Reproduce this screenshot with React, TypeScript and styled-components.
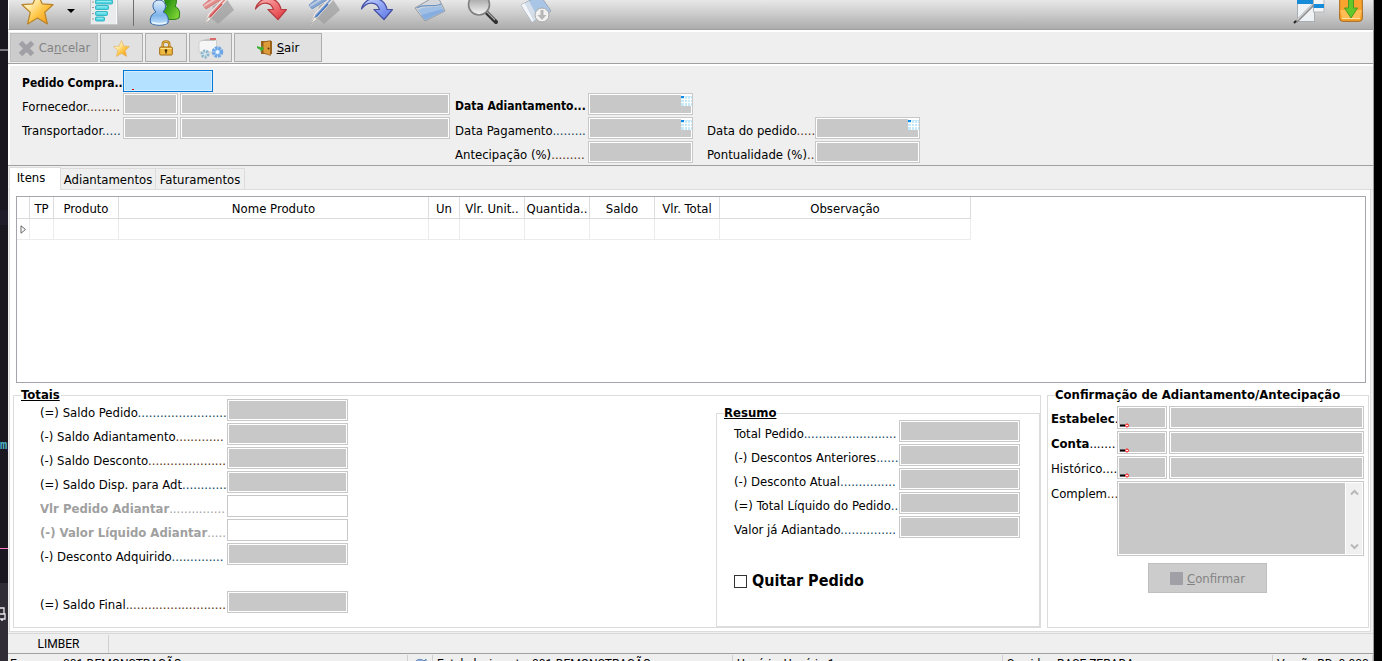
import React from "react";
import styled, { createGlobalStyle } from "styled-components";

const GlobalStyle = createGlobalStyle`
  * { box-sizing: border-box; }
  body { margin: 0; background: #000; overflow: hidden; }
  body, button, input, textarea {
    font-family: "DejaVu Sans Condensed", "DejaVu Sans", sans-serif;
    font-size: 13px;
    line-height: 16px;
    color: #000;
  }
`;

const Desktop = styled.div`
  display: flex;
  height: 100vh;
  overflow: hidden;
`;

const EditorEdge = styled.aside`
  flex: 0 0 8px;
  display: flex;
  flex-direction: column;
  overflow: hidden;
  background: #1a1720;
`;

const EdgeBand = styled.div<{ $h: number; $color?: string }>`
  flex: 0 0 ${(p) => p.$h}px;
  background: ${(p) => p.$color ?? "transparent"};
`;

const EdgeCode = styled.code`
  flex: 0 0 16px;
  font: bold 12px/16px "Liberation Mono", monospace;
  color: #4fb3c8;
`;

const EdgeTray = styled.div`
  flex: 1 0 auto;
  padding-top: 22px;
  background: #302d37;
`;

const Window = styled.main`
  flex: 1 1 auto;
  min-width: 0;
  display: flex;
  flex-direction: column;
  background: #efefef;
  border-right: 1px solid #a0a0a0;
`;

const RightEdge = styled.div`
  flex: 0 0 8px;
  background: #000;
`;

const Toolbar = styled.header`
  flex: 0 0 30px;
  display: flex;
  align-items: flex-end;
  overflow: hidden;
  padding: 0 5px 3px 2px;
  border-left: 1px solid #fff;
  border-bottom: 1px solid #a0a0a0;
  background: linear-gradient(#e8e8e8, #acacac);
`;

const ToolButton = styled.button<{ $w: number }>`
  flex: 0 0 ${(p) => p.$w}px;
  display: flex;
  justify-content: center;
  height: 34px;
  padding: 0;
  border: 0;
  background: none;
  svg { display: block; }
`;

const ToolSeparator = styled.span`
  flex: 0 0 1px;
  height: 28px;
  margin: 0 4px 0 3px;
  background: #6e6e6e;
`;

const Spacer = styled.span`
  flex: 1 1 auto;
`;

const ActionBar = styled.nav`
  flex: 0 0 34px;
  display: flex;
  gap: 2px;
  padding: 1px 2px 1px;
  border-top: 2px solid #fff;
  border-bottom: 1px solid #a0a0a0;
`;

const ActionButton = styled.button<{ $w: number }>`
  display: flex;
  align-items: center;
  justify-content: center;
  gap: 4px;
  width: ${(p) => p.$w}px;
  height: 29px;
  padding: 1px 0 0;
  border: 1px solid #adadad;
  background: #e1e1e1;
  &:disabled {
    border-color: #bfbfbf;
    background: #ccc;
    color: #838383;
  }
`;

const FormPanel = styled.section`
  flex: none;
  padding: 4px 0 2px 12px;
  border: solid #fff;
  border-width: 2px 0 0 2px;
`;

const FormColumns = styled.div`
  display: flex;
  align-items: flex-start;
  margin-top: 1px;
`;

const FieldStack = styled.div<{ $before?: number; $bottom?: boolean }>`
  display: flex;
  flex-direction: column;
  gap: 2px;
  margin-left: ${(p) => p.$before ?? 0}px;
  align-self: ${(p) => (p.$bottom ? "flex-end" : "flex-start")};
`;

const FieldRow = styled.div`
  display: flex;
  align-items: flex-start;
`;

const FieldLabel = styled.label<{ $w: number; $bold?: boolean; $muted?: boolean; $small?: boolean; $drop?: number }>`
  flex: none;
  width: ${(p) => p.$w}px;
  padding-top: ${(p) => p.$drop ?? 6}px;
  white-space: nowrap;
  font-size: ${(p) => (p.$small ? 12 : 13)}px;
  font-weight: ${(p) => (p.$bold ? 700 : 400)};
  color: ${(p) => (p.$muted ? "#a0a0a0" : "#000")};
`;

const Leader = styled.span<{ $tone?: string; $bold?: boolean }>`
  font-weight: ${(p) => (p.$bold ? 700 : 400)};
  color: ${(p) => p.$tone ?? "inherit"};
`;

const BoxWrap = styled.span<{ $w?: number }>`
  position: relative;
  flex: ${(p) => (p.$w ? `0 0 ${p.$w}px` : "1 1 0")};
  min-width: 0;
  display: flex;
  & + & { margin-left: 2px; }
  > svg { position: absolute; pointer-events: none; }
`;

const boxColors = {
  gray: ["#c8c8c8", "#c8c8c8"],
  white: ["#fff", "#c8c8c8"],
  focus: ["#b4e1ff", "#0078d7"],
};

const Box = styled.input<{ $kind: keyof typeof boxColors; $h: number }>`
  width: 100%;
  height: ${(p) => p.$h}px;
  padding: 0 2px;
  border: 1px solid ${(p) => boxColors[p.$kind][1]};
  background: ${(p) => boxColors[p.$kind][0]};
  box-shadow: inset 0 0 0 1px ${(p) => (p.$kind === "focus" ? "#d4edff" : "#fff")};
  outline: 0;
`;

const TabStrip = styled.div`
  flex: 0 0 25px;
  display: flex;
  align-items: flex-end;
  padding-left: 1px;
  border-top: 1px solid #a0a0a0;
  border-bottom: 1px solid #dcdcdc;
`;

const Tab = styled.button<{ $w: number; $active?: boolean }>`
  width: ${(p) => p.$w}px;
  height: ${(p) => (p.$active ? 23 : 21)}px;
  margin-bottom: ${(p) => (p.$active ? -1 : 0)}px;
  padding: ${(p) => (p.$active ? "0 8px 2px 0" : "1px 0 0")};
  border: 1px solid #dcdcdc;
  border-bottom: 0;
  border-left-width: ${(p) => (p.$active ? 1 : 0)}px;
  background: ${(p) => (p.$active ? "#fff" : "#efefef")};
`;

const TabPage = styled.section`
  flex: none;
  margin: 0 2px 1px 1px;
  padding-top: 6px;
  padding-bottom: 3px;
  border: 1px solid #dcdcdc;
  border-top: 0;
  background: #fff;
`;

const GridFrame = styled.div`
  height: 187px;
  margin: 0 4px 0 6px;
  border: 1px solid #a5a5ab;
  overflow: hidden;
`;

const DataTable = styled.table`
  width: 954px;
  table-layout: fixed;
  border-collapse: separate;
  border-spacing: 0;
  th, td {
    padding: 0;
    white-space: nowrap;
    text-align: center;
    font-weight: 400;
  }
  th { height: 22px; padding-top: 2px; border: solid #dcdcdc; border-width: 0 1px 1px 0; }
  td { height: 21px; border: solid #ececec; border-width: 0 1px 1px 0; }
  td svg { display: block; margin: 0 auto; }
`;

const GroupRow = styled.div`
  display: flex;
  gap: 6px;
  margin: 8px 1px 0 3px;
`;

const Group = styled.fieldset<{ $w?: number; $top?: number }>`
  flex: ${(p) => (p.$w ? `0 0 ${p.$w}px` : "1 1 auto")};
  min-width: 0;
  margin: ${(p) => p.$top ?? 0}px 0 0;
  padding: 0;
  border: 1px solid #dcdcdc;
`;

const GroupTitle = styled.legend<{ $underline?: boolean }>`
  margin-left: 7px;
  padding: 0 1px 0 0;
  line-height: 8px;
  font-weight: 700;
  white-space: nowrap;
  text-decoration: ${(p) => (p.$underline ? "underline" : "none")};
`;

const TotalsBody = styled.div`
  display: flex;
  justify-content: space-between;
  height: 228px;
  padding-left: 26px;
`;

const SummaryBody = styled.div`
  padding: 3px 0 0 17px;
`;

const ConfirmBody = styled.div`
  display: flex;
  flex-direction: column;
  gap: 2px;
  padding: 7px 4px 0 3px;
`;

const RowGap = styled.div`
  height: 22px;
`;

const CheckLabel = styled.label`
  display: flex;
  align-items: center;
  gap: 5px;
  margin-top: 32px;
  font-size: 16px;
  line-height: 22px;
  font-weight: 700;
`;

const CheckBox = styled.input`
  appearance: none;
  width: 13px;
  height: 13px;
  margin: 0;
  border: 1px solid #333;
  background: #fff;
`;

const NotesFrame = styled.div`
  position: relative;
  flex: 1 1 0;
  display: flex;
  height: 75px;
  padding: 1px;
  border: 1px solid #c8c8c8;
  background: #fff;
`;

const Notes = styled.textarea`
  flex: 1 1 0;
  min-width: 0;
  padding: 0;
  border: 0;
  resize: none;
  background: #c8c8c8;
`;

const ScrollTrack = styled.div`
  flex: 0 0 17px;
  display: flex;
  flex-direction: column;
  align-items: center;
  justify-content: space-between;
  padding: 6px 0 4px;
  border-left: 1px solid #fff;
  background: #f0f0f0;
`;

const ConfirmButton = styled(ActionButton)`
  align-self: center;
  height: 30px;
  margin: 5px 0 0;
`;

const DisabledGlyph = styled.span`
  width: 13px;
  height: 13px;
  border-radius: 1px;
  background: #a0a0a6;
`;

const StatusBar = styled.footer<{ $h: number }>`
  flex: 0 0 ${(p) => p.$h}px;
  display: flex;
  padding: 1px 0 0 1px;
  border-top: 1px solid #d8d8d8;
  font: 12px/17px Roboto, "Open Sans", sans-serif;
  & + & { padding-left: 0; border-top-color: #a0a0a0; }
`;

const StatusCell = styled.span<{ $w?: number; $center?: boolean; $pad?: number }>`
  flex: ${(p) => (p.$w ? `0 0 ${p.$w}px` : "1 1 0")};
  padding: ${(p) => (p.$center ? "1px 0 0" : `1px 0 0 ${p.$pad ?? 4}px`)};
  border-right: 1px solid #d0d0d0;
  white-space: nowrap;
  text-align: ${(p) => (p.$center ? "center" : "left")};
`;

const STAR = "M16 1 L20.5 11.5 L31 12.3 L23 19.8 L25.6 31 L16 25.2 L6.4 31 L9 19.8 L1 12.3 L11.5 11.5 Z";

const StarIcon = ({ size, id, edge }: { size: number; id: string; edge: string }) => (
  <svg width={size} height={size} viewBox="0 0 32 32">
    <defs>
      <linearGradient id={id} x1="0" y1="0" x2="1" y2="1">
        <stop offset="0.3" stopColor="#fff0b8" />
        <stop offset="0.6" stopColor="#ffc544" />
        <stop offset="1" stopColor="#f08c0c" />
      </linearGradient>
    </defs>
    <path d={STAR} fill={`url(#${id})`} stroke={edge} strokeWidth="1.2" strokeLinejoin="round" />
  </svg>
);

const ListIcon = () => (
  <svg width="32" height="34" viewBox="0 0 32 34">
    <rect x="2.500" y="0" width="27" height="32.500" fill="#e9ebed" stroke="#c4c6c8" />
    <path d="M28.500 1V32" stroke="#fafafa" />
    {[[2, 20], [8, 17], [13.5, 13], [19.5, 12], [25, 9]].map(([y, w]) => (
      <g key={y}>
        <rect x="7.500" y={y} width={w} height="4" rx="1" fill="#4fd6e2" stroke="#1fa9ba" strokeWidth=".8" />
        <path d={`M9 ${y + 1.4}h${w - 3}`} stroke="#a2eef2" />
        <path d={`M4 ${y + 2}h2`} stroke="#999" />
      </g>
    ))}
  </svg>
);

const UsersIcon = () => (
  <svg width="32" height="34" viewBox="0 0 32 34">
    <defs>
      <linearGradient id="userBlue" x1="0" y1="0" x2="0" y2="1">
        <stop offset="0" stopColor="#e3f0fc" />
        <stop offset="0.6" stopColor="#80b4ea" />
        <stop offset="1" stopColor="#c4e4fc" />
      </linearGradient>
      <linearGradient id="userGreen" x1="0" y1="0" x2="1" y2="1">
        <stop offset="0.3" stopColor="#2c9411" />
        <stop offset="1" stopColor="#8fe03d" />
      </linearGradient>
    </defs>
    <path d="M15 26C13 17 16 16 18.500 14.500C13 8 16 1 21.500 1C27 1 29 9 26 14.500C30 16 31.500 20 30 26C27 28 20 28 15 26Z" fill="url(#userGreen)" stroke="#237a10" />
    <path d="M1.500 31C.5 25 3 22 7 20C1.500 15 4 8 10 8C16 8 19 15 14 20C18 22 20 25 19 31C15 34 6 34 1.500 31Z" fill="url(#userBlue)" stroke="#3768a8" />
    <path d="M3 30.500C7 32 14 32 17.500 30.500" fill="none" stroke="#eaf7ff" strokeWidth="1.500" />
  </svg>
);

const PenIcon = ({ color, dark }: { color: string; dark: string }) => (
  <svg width="34" height="34" viewBox="0 0 34 34">
    <path d="M12 14L25 6L33 18L17 32L10 26Z" fill="#9c9c9c" opacity=".7" />
    <path d="M2 13L16 1L25 5L5 17Z" fill={color} stroke={dark} strokeOpacity=".5" />
    <path d="M3 14L21 3" stroke="#fff" strokeOpacity=".45" strokeWidth="2" />
    <path d="M30 3L11 24L4 32L8 22L26 3Z" fill={color} stroke="#f2e9e6" strokeWidth="1.200" />
    <path d="M21 12L9 25" stroke={dark} strokeWidth="1.500" />
    <path d="M3.500 32L7.500 25L10.500 27Z" fill="#f6f1e6" stroke="#999" strokeWidth=".7" />
  </svg>
);

const CurveArrow = ({ id, light, deep, edge }: { id: string; light: string; deep: string; edge: string }) => (
  <svg width="34" height="34" viewBox="0 0 34 34">
    <defs>
      <linearGradient id={id} x1="0" y1="0" x2="1" y2="1">
        <stop offset="0" stopColor={light} />
        <stop offset="1" stopColor={deep} />
      </linearGradient>
    </defs>
    <path d="M1.500 17C4 4 24 2 27 17.500H32.500L24 27.500L14 17.500H19.500C17 9 7 9 1.500 17Z" fill={`url(#${id})`} stroke={edge} strokeWidth="1.200" strokeLinejoin="round" />
  </svg>
);

const FolderIcon = () => (
  <svg width="32" height="34" viewBox="0 0 32 34">
    <path d="M1 16L23 3L31 19L11 29Z" fill="#d3d7dc" stroke="#9299a2" />
    <path d="M4 18C11 13 21 17 27 13L30 19L11 28Z" fill="#9fbfe4" />
    <path d="M7 23L29 17L30 19L11 28Z" fill="#86ade0" />
    <path d="M3 16C11 11 20 16 27 12" fill="none" stroke="#6a93c2" strokeWidth="1.300" />
  </svg>
);

const SearchIcon = () => (
  <svg width="32" height="34" viewBox="0 0 32 34">
    <defs>
      <linearGradient id="lens" x1="0" y1="0" x2="0" y2="1">
        <stop offset="0.3" stopColor="#b0b0b0" />
        <stop offset="1" stopColor="#f6f6f6" />
      </linearGradient>
    </defs>
    <path d="M19 20L29 30" stroke="#303030" strokeWidth="4" strokeLinecap="round" />
    <path d="M20 20L28 28" stroke="#aaa" strokeWidth="1.300" />
    <circle cx="12" cy="12.500" r="10.500" fill="url(#lens)" stroke="#808080" strokeWidth="1.600" />
  </svg>
);

const DownloadDocIcon = () => (
  <svg width="32" height="34" viewBox="0 0 32 34">
    <path d="M1 13L20 3L31 19L12 30Z" fill="#a9c5e6" stroke="#9ba7b5" />
    <path d="M1 13L5 11L14 29L12 30Z" fill="#f3f5f8" />
    <path d="M5 11L9 9L18 26L14 29Z" fill="#d5dfeb" />
    <circle cx="22" cy="23" r="7" fill="#f1f1f1" stroke="#a8a8a8" />
    <path d="M20.500 18H23.500V23H26.500L22 28L17.500 23H20.500Z" fill="#b7b7b7" />
  </svg>
);

const WindowPenIcon = () => (
  <svg width="32" height="34" viewBox="0 0 32 34">
    <rect x="4.500" y="1.500" width="17" height="28" fill="#eef2f5" stroke="#a7adb2" />
    <rect x="4" y="8" width="17" height="4" fill="#178ad8" />
    <rect x="20.500" y="7" width="10.500" height="13" fill="#f2f4f6" stroke="#b3b8bc" />
    <rect x="20.500" y="12" width="10.500" height="4" fill="#178ad8" />
    <path d="M20 13L3 30" stroke="#8e8e8e" strokeWidth="3" />
    <path d="M19 13L4 28" stroke="#d4d4d4" strokeWidth="1.200" />
    <path d="M3 29L1 31" stroke="#222" strokeWidth="2" />
  </svg>
);

const InboxIcon = () => (
  <svg width="24" height="34" viewBox="0 0 24 34">
    <rect x=".7" y="4" width="22.600" height="25.300" rx="3" fill="#f9a42e" stroke="#a86413" />
    <path d="M1 18H23L21 26H3Z" fill="#ffbd54" />
    <path d="M3 26.500H21" stroke="#ffe1a2" />
    <path d="M9.500 3H14.500V16H18.500L12 26L5.500 16H9.500Z" fill="#63c92b" stroke="#4d9a22" />
  </svg>
);

const CancelIcon = () => (
  <svg width="17" height="17" viewBox="0 0 17 17">
    <path d="M2.500 2.500L14.500 14.500M14.500 2.500L2.500 14.500" stroke="#a0a0a6" strokeWidth="5" />
  </svg>
);

const LockIcon = () => (
  <svg width="14" height="16" viewBox="0 0 14 16">
    <path d="M3.700 8V4.500C3.700.5 10.300.5 10.300 4.500V8" fill="none" stroke="#b37c17" strokeWidth="2.400" />
    <path d="M3.700 8V4.500C3.700.5 10.300.5 10.300 4.500V8" fill="none" stroke="#f0c55b" strokeWidth=".8" />
    <rect x=".7" y="7" width="12.600" height="8" rx="1" fill="#eeb93e" stroke="#a16b11" />
    <path d="M1.500 8.500H12.500" stroke="#ffe58d" />
    <circle cx="7" cy="10.500" r="1.300" fill="#442b05" />
    <path d="M7 11V13.500" stroke="#442b05" strokeWidth="1.300" />
  </svg>
);

const GearIcon = () => (
  <svg width="26" height="22" viewBox="0 0 26 22">
    <path d="M1 5L5 3H18.500V15H1Z" fill="#f6f6f6" stroke="#cfcfcf" />
    <path d="M2 4L10 1.500H17V4Z" fill="#c4c4c4" />
    <path d="M12 1H18V3H12Z" fill="#d86a6a" />
    <circle cx="7" cy="17" r="3" fill="#d5e6ee" stroke="#8db5cb" strokeWidth="3" strokeDasharray="2 1" />
    <circle cx="19.500" cy="15" r="4" fill="#a9cff8" stroke="#6aa5e6" strokeWidth="3.500" strokeDasharray="2.400 .8" />
    <circle cx="19.500" cy="15" r="1.800" fill="#edf6ff" />
  </svg>
);

const ExitIcon = () => (
  <svg width="16" height="16" viewBox="0 0 16 16">
    <rect x="4.500" y="1.500" width="10" height="12" fill="#8a5a1c" stroke="#9a641c" />
    <path d="M6 2L13.500 .7V15.300L6 13Z" fill="#dd9a39" stroke="#91591a" strokeWidth=".8" />
    <circle cx="11.500" cy="8.500" r="1" fill="#5a360d" />
    <path d="M0 6L4.500 7.500V5L7 9L3.500 12V10L0 8Z" fill="#3fae33" />
  </svg>
);

const CalendarIcon = () => (
  <svg width="11" height="11" viewBox="0 0 11 11" style={{ right: 1, top: 2 }}>
    <rect width="11" height="11" fill="#c6e9fa" />
    <path d="M0 4.500H11M0 7.500H11M3.500 2V11M6.500 2V11M9.500 2V11" stroke="#fff" />
    <path d="M0 0H11V1H0Z" fill="#fff" />
    <path d="M0 2H3" stroke="#0b8be6" strokeWidth="2" />
  </svg>
);

const RequiredMark = () => (
  <svg width="10" height="5" viewBox="0 0 10 5" style={{ left: 3, bottom: 1 }}>
    <path d="M0 2.500H5" stroke="#000" strokeWidth="2" />
    <circle cx="7" cy="2.500" r="1.500" fill="#fff" stroke="#f00" />
  </svg>
);

const FocusMark = () => (
  <svg width="2" height="1" viewBox="0 0 2 1" style={{ left: 9, bottom: 2 }}>
    <rect width="2" height="1" fill="#e00000" />
  </svg>
);

const Chevron = ({ d }: { d: string }) => (
  <svg width="9" height="7" viewBox="0 0 9 7">
    <path d={d} fill="none" stroke="#b8b8b8" strokeWidth="2" />
  </svg>
);

const BROWN = "#55300f";
const BLUE = "#0f4260";

interface BoxSpec {
  w?: number;
  kind?: keyof typeof boxColors;
  mark?: React.ReactNode;
}

interface FieldProps {
  id: string;
  text: string;
  dots: number;
  tone?: string;
  labelWidth: number;
  bold?: boolean;
  muted?: boolean;
  small?: boolean;
  drop?: number;
  height?: number;
  boxes: BoxSpec[];
}

const Field = ({ id, text, dots, tone, labelWidth, bold, muted, small, drop, height = 22, boxes }: FieldProps) => (
  <FieldRow>
    <FieldLabel htmlFor={id} $w={labelWidth} $bold={bold} $muted={muted} $small={small} $drop={drop}>
      {text}
      <Leader $tone={tone} $bold={small}>{".".repeat(dots)}</Leader>
    </FieldLabel>
    {boxes.map((b, i) => (
      <BoxWrap key={i} $w={b.w}>
        <Box
          id={i === 0 ? id : `${id}-nome`}
          aria-label={i === 0 ? undefined : `${text} nome`}
          $kind={b.kind ?? "gray"}
          $h={height}
        />
        {b.mark}
      </BoxWrap>
    ))}
  </FieldRow>
);

const columns: [string, number][] = [
  ["", 13],
  ["TP", 24],
  ["Produto", 65],
  ["Nome Produto", 310],
  ["Un", 31],
  ["Vlr. Unit..", 65],
  ["Quantida..", 65],
  ["Saldo", 65],
  ["Vlr. Total", 65],
  ["Observação", 251],
];

export default function App() {
  const date = { w: 105, mark: <CalendarIcon /> };
  const total = (id: string, text: string, dots: number, tone?: string, open?: boolean) => (
    <Field id={id} text={text} dots={dots} tone={tone} labelWidth={187} bold={open} muted={open}
      boxes={[{ w: 121, kind: open ? "white" : "gray" }]} />
  );
  const summary = (id: string, text: string, dots: number) => (
    <Field id={id} text={text} dots={dots} tone={BLUE} labelWidth={165} boxes={[{ w: 121 }]} />
  );
  return (
    <Desktop>
      <GlobalStyle />
      <EditorEdge aria-hidden="true">
        <EdgeBand $h={49} />
        <EdgeBand $h={2} $color="#77757b" />
        <EdgeBand $h={159} />
        <EdgeBand $h={15} $color="#201c2c" />
        <EdgeBand $h={213} />
        <EdgeCode>mp</EdgeCode>
        <EdgeBand $h={94} />
        <EdgeBand $h={1} $color="#ff79c6" />
        <EdgeBand $h={34} />
        <EdgeTray>
          <svg width="8" height="18" viewBox="0 0 8 18">
            <path d="M0 3H4V9M0 9H5V14H0M1 15H3" fill="none" stroke="#e6e6ea" strokeWidth="1.300" />
          </svg>
        </EdgeTray>
      </EditorEdge>

      <Window>
        <Toolbar>
          <ToolButton $w={53} aria-label="Favoritos"><StarIcon size={33} id="starBig" edge="#b98428" /></ToolButton>
          <ToolButton $w={14} aria-label="Mais favoritos">
            <svg width="8" height="34" viewBox="0 0 8 34"><path d="M0 17H8L4 21Z" fill="#000" /></svg>
          </ToolButton>
          <ToolButton $w={52} aria-label="Lista"><ListIcon /></ToolButton>
          <ToolSeparator />
          <ToolButton $w={53} aria-label="Usuários"><UsersIcon /></ToolButton>
          <ToolButton $w={53} aria-label="Editar saída"><PenIcon color="#e08a8a" dark="#d05050" /></ToolButton>
          <ToolButton $w={53} aria-label="Saída">
            <CurveArrow id="arrowRed" light="#ffb9b9" deep="#df2f36" edge="#b63a3f" />
          </ToolButton>
          <ToolButton $w={53} aria-label="Editar entrada"><PenIcon color="#86a5d0" dark="#3f74c0" /></ToolButton>
          <ToolButton $w={53} aria-label="Entrada">
            <CurveArrow id="arrowBlue" light="#c7d6ff" deep="#5672e4" edge="#4450a4" />
          </ToolButton>
          <ToolButton $w={53} aria-label="Pasta"><FolderIcon /></ToolButton>
          <ToolButton $w={53} aria-label="Pesquisar"><SearchIcon /></ToolButton>
          <ToolButton $w={53} aria-label="Baixar"><DownloadDocIcon /></ToolButton>
          <Spacer />
          <ToolButton $w={50} aria-label="Janelas"><WindowPenIcon /></ToolButton>
          <ToolButton $w={34} aria-label="Receber"><InboxIcon /></ToolButton>
        </Toolbar>

        <ActionBar>
          <ActionButton $w={88} disabled><CancelIcon /><span>Ca<u>n</u>celar</span></ActionButton>
          <ActionButton $w={43} aria-label="Favorito"><StarIcon size={17} id="starSmall" edge="#e2b060" /></ActionButton>
          <ActionButton $w={42} aria-label="Bloquear"><LockIcon /></ActionButton>
          <ActionButton $w={43} aria-label="Configurar"><GearIcon /></ActionButton>
          <ActionButton $w={88}><ExitIcon /><span><u>S</u>air</span></ActionButton>
        </ActionBar>

        <FormPanel>
          <Field id="pedido" text="Pedido Compra" dots={2} labelWidth={101} bold small drop={5}
            boxes={[{ w: 90, kind: "focus", mark: <FocusMark /> }]} />
          <FormColumns>
            <FieldStack>
              <Field id="fornecedor" text="Fornecedor" dots={9} tone={BROWN} labelWidth={101} boxes={[{ w: 55 }, { w: 270 }]} />
              <Field id="transportador" text="Transportador" dots={5} tone={BLUE} labelWidth={101} boxes={[{ w: 55 }, { w: 270 }]} />
            </FieldStack>
            <FieldStack $before={5}>
              <Field id="dataAdt" text="Data Adiantamento" dots={3} labelWidth={133} bold small drop={5} boxes={[date]} />
              <Field id="dataPag" text="Data Pagamento" dots={9} tone={BLUE} labelWidth={133} boxes={[date]} />
              <Field id="antecipacao" text="Antecipação (%)" dots={9} tone={BROWN} labelWidth={133} boxes={[{ w: 105 }]} />
            </FieldStack>
            <FieldStack $before={14} $bottom>
              <Field id="dataPedido" text="Data do pedido" dots={5} tone={BROWN} labelWidth={108} boxes={[date]} />
              <Field id="pontualidade" text="Pontualidade (%)" dots={2} tone={BROWN} labelWidth={108} boxes={[{ w: 105 }]} />
            </FieldStack>
          </FormColumns>
        </FormPanel>

        <TabStrip role="tablist">
          <Tab $w={52} $active role="tab" aria-selected="true">Itens</Tab>
          <Tab $w={95} role="tab" aria-selected="false">Adiantamentos</Tab>
          <Tab $w={89} role="tab" aria-selected="false">Faturamentos</Tab>
        </TabStrip>

        <TabPage role="tabpanel">
          <GridFrame>
            <DataTable>
              <colgroup>
                {columns.map(([name, w]) => <col key={name} width={w} />)}
              </colgroup>
              <thead>
                <tr>{columns.map(([name]) => <th key={name} scope="col">{name}</th>)}</tr>
              </thead>
              <tbody>
                <tr>
                  {columns.map(([name], i) => (
                    <td key={name}>
                      {i === 0 && (
                        <svg width="7" height="9" viewBox="0 0 7 9">
                          <path d="M1 .8V8.200L5.500 4.500Z" fill="#fff" stroke="#666" />
                        </svg>
                      )}
                    </td>
                  ))}
                </tr>
              </tbody>
            </DataTable>
          </GridFrame>

          <GroupRow>
            <Group>
              <GroupTitle $underline>Totais</GroupTitle>
              <TotalsBody>
                <FieldStack>
                  {total("saldoPedido", "(=) Saldo Pedido", 24, BLUE)}
                  {total("saldoAdt", "(-) Saldo Adiantamento", 13, BROWN)}
                  {total("saldoDesc", "(-) Saldo Desconto", 21, BROWN)}
                  {total("saldoDisp", "(=) Saldo Disp. para Adt", 12, BLUE)}
                  {total("vlrPedido", "Vlr Pedido Adiantar", 15, undefined, true)}
                  {total("vlrLiquido", "(-) Valor Líquido Adiantar", 5, undefined, true)}
                  {total("descAdq", "(-) Desconto Adquirido", 14, BLUE)}
                  <RowGap />
                  {total("saldoFinal", "(=) Saldo Final", 27, BROWN)}
                </FieldStack>
                <Group $w={324} $top={10}>
                  <GroupTitle $underline>Resumo</GroupTitle>
                  <SummaryBody>
                    <FieldStack>
                      {summary("totalPedido", "Total Pedido", 25)}
                      {summary("descAnt", "(-) Descontos Anteriores", 6)}
                      {summary("descAtual", "(-) Desconto Atual", 15)}
                      {summary("totalLiq", "(=) Total Líquido do Pedido", 2)}
                      {summary("valorAdt", "Valor já Adiantado", 15)}
                    </FieldStack>
                    <CheckLabel><CheckBox type="checkbox" />Quitar Pedido</CheckLabel>
                  </SummaryBody>
                </Group>
              </TotalsBody>
            </Group>

            <Group $w={322}>
              <GroupTitle>Confirmação de Adiantamento/Antecipação</GroupTitle>
              <ConfirmBody>
                <Field id="estab" text="Estabelec" dots={1} labelWidth={66} bold drop={5} height={23}
                  boxes={[{ w: 50, mark: <RequiredMark /> }, {}]} />
                <Field id="conta" text="Conta" dots={7} labelWidth={66} bold drop={5} height={23}
                  boxes={[{ w: 50, mark: <RequiredMark /> }, {}]} />
                <Field id="historico" text="Histórico" dots={4} labelWidth={66} drop={5} height={23}
                  boxes={[{ w: 50, mark: <RequiredMark /> }, {}]} />
                <FieldRow>
                  <FieldLabel htmlFor="complemento" $w={66} $drop={5}>Complem<Leader $tone={BROWN}>...</Leader></FieldLabel>
                  <NotesFrame>
                    <Notes id="complemento" />
                    <ScrollTrack>
                      <Chevron d="M1 5.500L4.500 2L8 5.500" />
                      <Chevron d="M1 1.500L4.500 5L8 1.500" />
                    </ScrollTrack>
                  </NotesFrame>
                </FieldRow>
                <ConfirmButton $w={119} disabled><DisabledGlyph /><span><u>C</u>onfirmar</span></ConfirmButton>
              </ConfirmBody>
            </Group>
          </GroupRow>
        </TabPage>

        <StatusBar $h={19}>
          <StatusCell $w={100} $center>LIMBER</StatusCell>
        </StatusBar>
        <StatusBar $h={24}>
          <StatusCell $w={400} $pad={2}>Empresa: 001-DEMONSTRAÇÃO</StatusCell>
          <StatusCell $w={25}>
            <svg width="16" height="16" viewBox="0 0 16 16">
              <path d="M2 10C2 3 9 2 12 5L14 3V10H8L10 7C8 5 5 6 5 10Z" fill="#8fb0d8" stroke="#5f86b8" />
            </svg>
          </StatusCell>
          <StatusCell $w={300}>Estabelecimento: 001-DEMONSTRAÇÃO</StatusCell>
          <StatusCell $w={270}>Usuário: Usuário 1</StatusCell>
          <StatusCell $w={270}>Servidor: BASE ZERADA</StatusCell>
          <StatusCell>Versão BD: 0.000</StatusCell>
        </StatusBar>
      </Window>
      <RightEdge />
    </Desktop>
  );
}
